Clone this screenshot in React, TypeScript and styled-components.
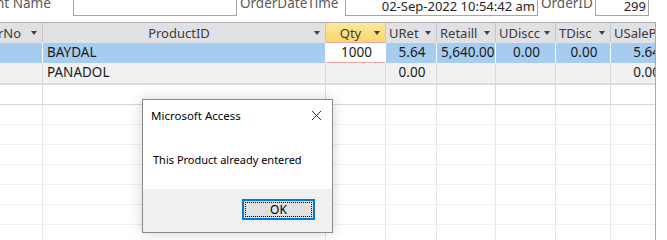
import React from "react";
import styled, { createGlobalStyle } from "styled-components";

const GlobalStyle = createGlobalStyle`
  html, body {
    margin: 0;
    padding: 0;
    background: #ffffff;
    overflow: hidden;
  }
  body {
    font-family: "Noto Sans", "Open Sans", sans-serif;
  }
`;

interface Column {
  title: string;
  width: number;
  align: "left" | "right" | "center";
  highlight?: boolean;
}

const columns: Column[] = [
  { title: "rNo", width: 42, align: "left" },
  { title: "ProductID", width: 283, align: "left" },
  { title: "Qty", width: 60, align: "center", highlight: true },
  { title: "URet", width: 51, align: "center" },
  { title: "Retaill", width: 59, align: "center" },
  { title: "UDiscc", width: 60, align: "center" },
  { title: "TDisc", width: 55, align: "center" },
  { title: "USaleP", width: 52, align: "right" },
];

const rows: string[][] = [
  ["", "BAYDAL", "1000", "5.64", "5,640.00", "0.00", "0.00", "5.64"],
  ["", "PANADOL", "", "0.00", "", "", "", "0.00"],
];

const App = () => {
  return (
    <Page>
      <GlobalStyle />
      <TopBar>
        <Label $width={77} $offset={-4}>nt Name</Label>
        <Field $width={164} />
        <Label $width={108} $offset={0}>OrderDateTime</Label>
        <Field $width={193}>02-Sep-2022 10:54:42 am</Field>
        <Label $width={57} $offset={0}>OrderID</Label>
        <Field $width={54}>299</Field>
      </TopBar>

      <Grid>
        <GridInner>
          <HeaderRow>
            {columns.map((c, i) => (
              <HeaderCell key={i} $width={c.width} $highlight={c.highlight} $first={i === 0}>
                <HeaderText
                  $center={c.title === "ProductID" || !!c.highlight}
                  $fixed={i === columns.length - 1}
                >
                  {c.title}
                </HeaderText>
                <Arrow />
              </HeaderCell>
            ))}
          </HeaderRow>
          {rows.map((r, ri) => (
            <DataRow key={ri} $tone={ri === 0 ? "selected" : "alt"}>
              {r.map((v, ci) => (
                <Cell
                  key={ci}
                  $width={columns[ci].width}
                  $align={columns[ci].align}
                  $editing={ri === 0 && ci === 2}
                  $tone={ri === 0 ? "selected" : "alt"}
                  $first={ci === 0}
                >
                  {v}
                </Cell>
              ))}
            </DataRow>
          ))}
          <NewRow>
            {columns.map((c, ci) => (
              <Cell key={ci} $width={c.width} $align="left" $tone="new" $first={ci === 0} />
            ))}
          </NewRow>
          {Array.from({ length: 7 }).map((_, ri) => (
            <EmptyRow key={ri}>
              {columns.map((c, ci) => (
                <EmptyCell key={ci} $width={c.width} />
              ))}
            </EmptyRow>
          ))}
        </GridInner>
      </Grid>

      <Dialog>
        <DialogTitleBar>
          <DialogTitle>Microsoft Access</DialogTitle>
          <CloseIcon viewBox="0 0 12 12">
            <path d="M1 1 L11 11 M11 1 L1 11" stroke="#1a1a1a" strokeWidth="1" fill="none" />
          </CloseIcon>
        </DialogTitleBar>
        <DialogBody>This Product already entered</DialogBody>
        <DialogFooter>
          <OkButton>
            <OkInner>OK</OkInner>
          </OkButton>
        </DialogFooter>
      </Dialog>
    </Page>
  );
};

export default App;

const Page = styled.div`
  position: relative;
  width: 667px;
  height: 240px;
  overflow: hidden;
  background: #ffffff;
`;

const TopBar = styled.div`
  display: flex;
  align-items: flex-start;
  height: 26px;
  margin-top: -4px;
`;

const Label = styled.div<{ $width: number; $offset: number }>`
  flex: none;
  box-sizing: border-box;
  width: ${p => p.$width}px;
  margin-left: ${p => p.$offset}px;
  margin-top: -1px;
  padding: 0 0 0 3px;
  font-size: 13.5px;
  line-height: 16px;
  color: #595959;
  white-space: nowrap;
  overflow: hidden;
  &:first-child {
    padding-left: 0;
  }
`;

const Field = styled.div<{ $width: number }>`
  flex: none;
  width: ${p => p.$width}px;
  height: 20px;
  box-sizing: border-box;
  border: 1px solid #a6a6a6;
  font-size: 13px;
  color: #262626;
  text-align: right;
  padding: 2px 2px 0 0;
  line-height: 15px;
  white-space: nowrap;
  overflow: hidden;
`;

const Grid = styled.div`
  width: 656px;
  box-sizing: border-box;
  border-right: 1px solid #a8a8a8;
  overflow: hidden;
`;

const GridInner = styled.div`
  display: flex;
  flex-direction: column;
  width: 680px;
`;

const HeaderRow = styled.div`
  display: flex;
  height: 20px;
  border-top: 1px solid #b4b4b4;
`;

const HeaderCell = styled.div<{ $width: number; $highlight?: boolean; $first?: boolean }>`
  width: ${p => p.$width}px;
  flex: none;
  box-sizing: border-box;
  display: flex;
  align-items: center;
  padding: 0 5px 0 3px;
  border-left: ${p => (p.$first ? "none" : "1px solid #c6c6c6")};
  background: ${p =>
    p.$highlight ? "linear-gradient(#fde89a, #f9d868)" : "#dfe1e5"};
  border-bottom: 1px solid ${p => (p.$highlight ? "#f2a7a7" : "#dfe1e5")};
  overflow: hidden;
  &:first-child {
    padding-left: 0;
    margin-left: -2px;
    width: ${p => p.$width + 2}px;
  }
`;

const HeaderText = styled.span<{ $center?: boolean; $fixed?: boolean }>`
  flex: ${p => (p.$fixed ? "none" : "1")};
  font-size: 13px;
  color: #3c3c3c;
  white-space: nowrap;
  overflow: hidden;
  text-align: ${p => (p.$center ? "center" : "left")};
`;

const Arrow = styled.span`
  flex: none;
  width: 0;
  height: 0;
  margin-left: 2px;
  border-left: 3.5px solid transparent;
  border-right: 3.5px solid transparent;
  border-top: 4px solid #404040;
`;

const DataRow = styled.div<{ $tone: string }>`
  display: flex;
  height: 20px;
  border-bottom: ${p => (p.$tone === "alt" ? "2px solid #dcdcdc" : "none")};
`;

const Cell = styled.div<{
  $width: number;
  $align: string;
  $editing?: boolean;
  $tone: string;
  $first?: boolean;
}>`
  width: ${p => p.$width}px;
  flex: none;
  box-sizing: border-box;
  height: 100%;
  padding: 0 2px 0 4px;
  font-size: 13.5px;
  line-height: 19px;
  color: #1a1a1a;
  white-space: nowrap;
  overflow: hidden;
  text-align: ${p => p.$align};
  border-left: ${p => (p.$first ? "none" : "1px solid #dadada")};
  background: ${p =>
    p.$editing
      ? "#ffffff"
      : p.$tone === "selected"
      ? "#a6cdf0"
      : p.$tone === "alt"
      ? "#f1f1f1"
      : "#ffffff"};
  border-bottom: ${p => (p.$editing ? "1px solid #f2a7a7" : "none")};
  ${p => (p.$tone === "selected" && !p.$first ? "border-left-color: #ffffff;" : "")}
`;

const NewRow = styled.div`
  display: flex;
  height: 19px;
  border-bottom: 1px solid #d6d6d6;
`;

const EmptyRow = styled.div`
  display: flex;
  height: 20px;
  border-bottom: 1px solid #efefef;
  box-sizing: border-box;
`;

const EmptyCell = styled.div<{ $width: number }>`
  width: ${p => p.$width}px;
  flex: none;
  box-sizing: border-box;
  border-left: 1px solid #e6e6e6;
  &:first-child {
    border-left: none;
  }
`;

const Dialog = styled.div`
  position: absolute;
  left: 142px;
  top: 99px;
  width: 191px;
  height: 134px;
  box-sizing: border-box;
  border: 1px solid #8a8a8a;
  background: #ffffff;
  box-shadow: 0 0 12px rgba(0, 0, 0, 0.18);
  display: flex;
  flex-direction: column;
`;

const DialogTitleBar = styled.div`
  display: flex;
  align-items: center;
  justify-content: space-between;
  height: 31px;
  padding: 0 10px 0 8px;
`;

const DialogTitle = styled.span`
  font-size: 11.5px;
  color: #000000;
`;

const CloseIcon = styled.svg`
  width: 11px;
  height: 11px;
`;

const DialogBody = styled.div`
  flex: 1;
  padding: 21px 0 0 10px;
  font-size: 11px;
  color: #000000;
`;

const DialogFooter = styled.div`
  height: 43px;
  background: #f0f0f0;
  display: flex;
  justify-content: flex-end;
  padding: 10px 17px 0 0;
  box-sizing: border-box;
`;

const OkButton = styled.div`
  width: 73px;
  height: 21px;
  box-sizing: border-box;
  border: 2px solid #0078d7;
  background: #e1e1e1;
  padding: 1px;
`;

const OkInner = styled.div`
  height: 100%;
  box-sizing: border-box;
  border: 1px dotted #000000;
  display: flex;
  align-items: center;
  justify-content: center;
  font-size: 12px;
  color: #000000;
`;
